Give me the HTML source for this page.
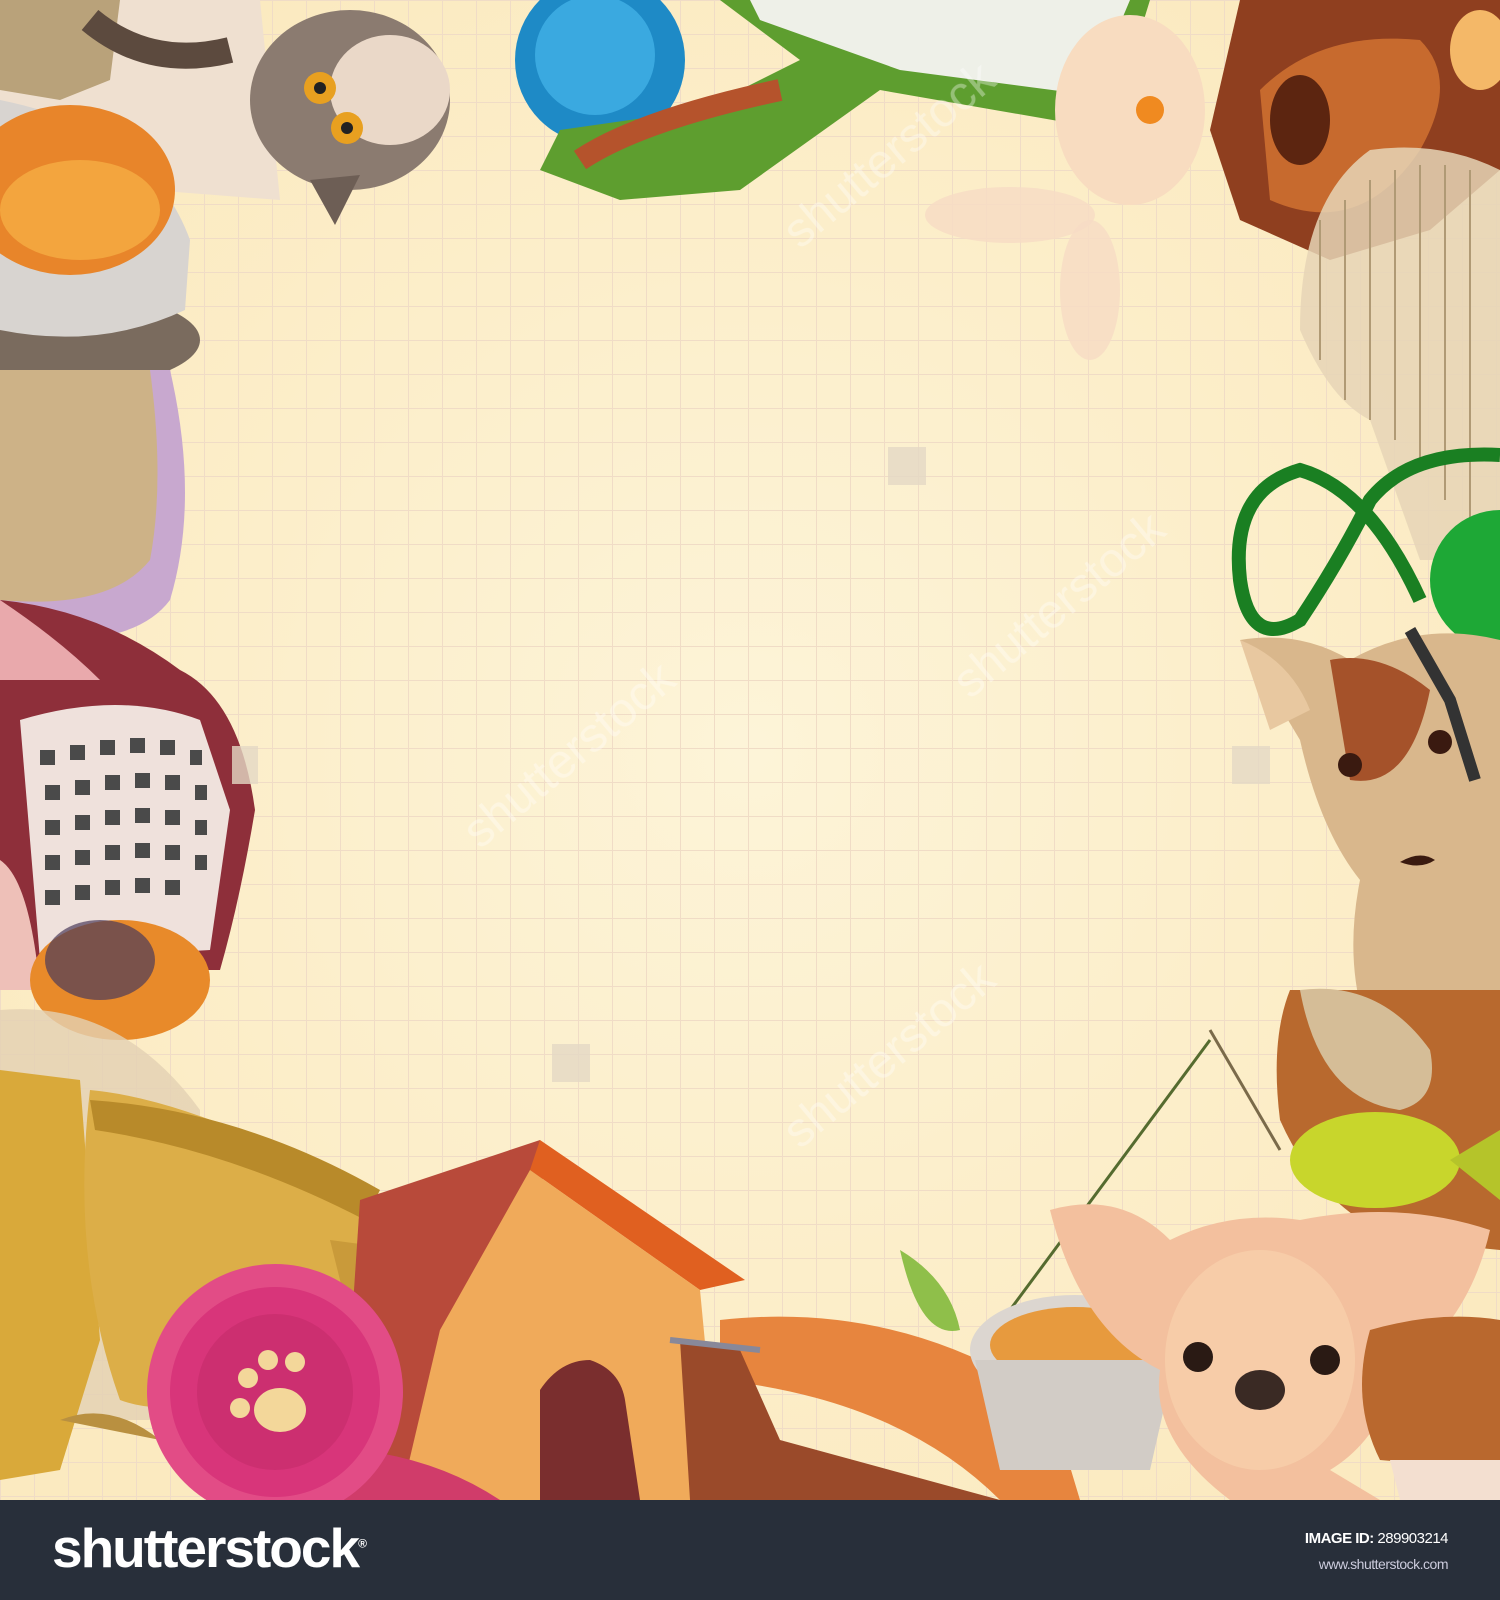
<!DOCTYPE html>
<html><head><meta charset="utf-8"><style>
html,body{margin:0;padding:0;width:1500px;height:1600px;overflow:hidden;background:#282f3a}
#art{position:absolute;left:0;top:0;width:1500px;height:1500px}
#bar{position:absolute;left:0;top:1500px;width:1500px;height:100px;background:#282f3a;color:#fff;font-family:"Liberation Sans",sans-serif}
#logo{position:absolute;left:52px;top:16px;font-size:55px;font-weight:bold;letter-spacing:-2px}
#id{position:absolute;right:52px;top:30px;font-size:15px;letter-spacing:-0.5px}
#www{position:absolute;right:52px;top:56px;font-size:14px;color:#ccd;letter-spacing:-0.5px}
</style></head><body>
<svg id="art" viewBox="0 0 1500 1500" xmlns="http://www.w3.org/2000/svg">
<defs>
<pattern id="g" width="34" height="34" patternUnits="userSpaceOnUse">
<path d="M0 0H34M0 0V34" stroke="#f0dcc6" stroke-width="2" fill="none"/>
</pattern>
<radialGradient id="bg" cx="50%" cy="50%" r="60%"><stop offset="0" stop-color="#fdf4d8"/><stop offset="1" stop-color="#fbeac0"/></radialGradient>
</defs>
<rect width="1500" height="1500" fill="url(#bg)"/>
<rect width="1500" height="1500" fill="url(#g)"/>
<!-- top left -->
<path d="M0 0H260L280 200 150 190 0 130Z" fill="#efe0d0"/>
<path d="M0 0H120L110 80 60 100 0 90Z" fill="#b9a27a"/>
<path d="M90 20Q150 70 230 50" stroke="#5c4a3e" stroke-width="26" fill="none"/>
<ellipse cx="350" cy="100" rx="100" ry="90" fill="#8b7b70"/>
<ellipse cx="390" cy="90" rx="60" ry="55" fill="#ead8c8"/>
<circle cx="320" cy="88" r="16" fill="#e8a020"/><circle cx="347" cy="128" r="16" fill="#e8a020"/>
<circle cx="320" cy="88" r="6" fill="#222"/><circle cx="347" cy="128" r="6" fill="#222"/>
<path d="M310 180L335 225 360 175Z" fill="#6d5e55"/>
<!-- bowl left -->
<ellipse cx="50" cy="340" rx="150" ry="50" fill="#7a6b5e"/>
<path d="M0 100Q150 130 190 240L185 310Q100 350 0 330Z" fill="#d8d4d0"/>
<ellipse cx="70" cy="190" rx="105" ry="85" fill="#e8852a"/>
<ellipse cx="80" cy="210" rx="80" ry="50" fill="#f3a53e"/>
<!-- purple bowl -->
<path d="M0 370H170Q200 500 170 600Q140 640 60 640L0 620Z" fill="#c8a8cf"/>
<path d="M0 370H150Q165 480 150 560Q110 610 0 600Z" fill="#cdb287"/>
<!-- blue pompom -->
<circle cx="600" cy="60" r="85" fill="#1e8ac6"/>
<circle cx="595" cy="55" r="60" fill="#3aa9e0"/>
<!-- green tray -->
<path d="M720 0H1150L1110 130 880 90 740 190 620 200 540 170 560 130 700 110 800 60Z" fill="#5e9e2f"/>
<path d="M750 0H1130L1090 95 900 70 760 20Z" fill="#eef0e8"/>
<path d="M580 160Q640 120 780 90" stroke="#b5532c" stroke-width="22" fill="none"/>
<!-- rabbit -->
<ellipse cx="1130" cy="110" rx="75" ry="95" fill="#f8dcc0"/>
<ellipse cx="1010" cy="215" rx="85" ry="28" fill="#f7dcc4" opacity=".85"/>
<ellipse cx="1090" cy="290" rx="30" ry="70" fill="#f7dcc4" opacity=".85"/>
<circle cx="1150" cy="110" r="14" fill="#f08a20"/>
<!-- brown toy top right -->
<path d="M1240 0H1500V170L1430 230 1330 260 1240 220 1210 130Z" fill="#8f3f1f"/>
<path d="M1260 90Q1320 30 1420 40 1460 80 1420 150 1360 240 1270 200Z" fill="#c76a2e"/>
<ellipse cx="1300" cy="120" rx="30" ry="45" fill="#5c2510"/>
<ellipse cx="1480" cy="50" rx="30" ry="40" fill="#f4b868"/>
<!-- cage right -->
<path d="M1370 150Q1300 200 1300 330 1330 400 1370 420L1420 560H1500V170Q1440 140 1370 150Z" fill="#e6d5b6" opacity=".85"/>
<path d="M1320 220V360M1345 200V400M1370 180V420M1395 170V440M1420 165V470M1445 165V500M1470 170V520" stroke="#b09a75" stroke-width="2"/>
<!-- green leash & ball -->
<circle cx="1500" cy="580" r="70" fill="#1ea836"/>
<path d="M1500 455Q1410 450 1370 500Q1340 560 1300 620Q1250 650 1240 580Q1230 490 1300 470Q1370 490 1420 600" stroke="#1a7f22" stroke-width="14" fill="none"/>
<!-- dog right -->
<path d="M1240 640Q1300 630 1350 660Q1420 620 1500 640V1110Q1430 1120 1380 1060 1340 980 1360 880 1320 830 1300 740Z" fill="#d9b78c"/>
<path d="M1240 640Q1290 660 1310 710L1270 730Z" fill="#e8c8a0"/>
<path d="M1330 660Q1380 650 1430 690 1410 790 1350 780Z" fill="#a5522a"/>
<circle cx="1350" cy="765" r="12" fill="#3a1a10"/><circle cx="1440" cy="742" r="12" fill="#3a1a10"/>
<path d="M1400 862Q1420 850 1435 860 1420 870 1400 862Z" fill="#3a1a10"/>
<path d="M1410 630L1450 700 1475 780" stroke="#333" stroke-width="12" fill="none"/>
<path d="M1290 990Q1270 1040 1280 1120 1320 1210 1400 1240L1500 1250V990Z" fill="#b8692e"/>
<path d="M1300 990Q1380 980 1430 1050 1440 1100 1400 1110 1320 1100 1300 990Z" fill="#d5bd97"/>
<!-- fish -->
<ellipse cx="1375" cy="1160" rx="85" ry="48" fill="#c8d62c"/>
<path d="M1450 1160L1500 1130V1200Z" fill="#b5c42a"/>
<path d="M1210 1030L1280 1150" stroke="#7a6a4a" stroke-width="3"/>
<path d="M1210 1040L1010 1310" stroke="#556b2f" stroke-width="3"/>
<!-- carrier left -->
<path d="M0 600Q100 610 180 670Q240 700 255 810 240 900 220 970H0Z" fill="#8e2f3a"/>
<path d="M0 600Q60 640 100 680L0 680Z" fill="#e9a9ac"/>
<path d="M20 720Q120 690 200 720L230 810 210 950 40 960Z" fill="#efe1dc"/>
<g fill="#4a4a4a">
<rect x="40" y="750" width="15" height="15"/><rect x="70" y="745" width="15" height="15"/><rect x="100" y="740" width="15" height="15"/><rect x="130" y="738" width="15" height="15"/><rect x="160" y="740" width="15" height="15"/><rect x="190" y="750" width="12" height="15"/>
<rect x="45" y="785" width="15" height="15"/><rect x="75" y="780" width="15" height="15"/><rect x="105" y="775" width="15" height="15"/><rect x="135" y="773" width="15" height="15"/><rect x="165" y="775" width="15" height="15"/><rect x="195" y="785" width="12" height="15"/>
<rect x="45" y="820" width="15" height="15"/><rect x="75" y="815" width="15" height="15"/><rect x="105" y="810" width="15" height="15"/><rect x="135" y="808" width="15" height="15"/><rect x="165" y="810" width="15" height="15"/><rect x="195" y="820" width="12" height="15"/>
<rect x="45" y="855" width="15" height="15"/><rect x="75" y="850" width="15" height="15"/><rect x="105" y="845" width="15" height="15"/><rect x="135" y="843" width="15" height="15"/><rect x="165" y="845" width="15" height="15"/><rect x="195" y="855" width="12" height="15"/>
<rect x="45" y="890" width="15" height="15"/><rect x="75" y="885" width="15" height="15"/><rect x="105" y="880" width="15" height="15"/><rect x="135" y="878" width="15" height="15"/><rect x="165" y="880" width="15" height="15"/>
</g>
<path d="M0 860Q30 880 40 990H0Z" fill="#eec0b8"/>
<!-- guinea pig -->
<ellipse cx="120" cy="980" rx="90" ry="60" fill="#e88a2a"/>
<ellipse cx="100" cy="960" rx="55" ry="40" fill="#4b3a5a" opacity=".7"/>
<!-- cage bottom left -->
<path d="M0 1010Q120 1000 200 1110V1420H0Z" fill="#e3d1b3" opacity=".8"/>
<!-- trophy -->
<path d="M0 1070L80 1080 100 1340 60 1470 0 1480Z" fill="#d9a93a"/>
<path d="M90 1090Q200 1100 380 1200L340 1340Q200 1430 120 1400 70 1260 90 1090Z" fill="#dcae48"/>
<path d="M90 1100Q240 1110 380 1190L365 1220Q230 1150 95 1130Z" fill="#b88a2a"/>
<path d="M330 1240L480 1260 420 1300 350 1320Z" fill="#c99a3a"/>
<path d="M60 1420Q110 1400 160 1440 150 1500H40Z" fill="#b99040"/>
<!-- dog house -->
<path d="M360 1200L540 1140 560 1430 400 1500 340 1500Z" fill="#b84a3a"/>
<path d="M540 1140L745 1280 700 1290 530 1170Z" fill="#e06020"/>
<path d="M530 1170L700 1290 720 1500H400L440 1330Z" fill="#f0aa5a"/>
<path d="M540 1460V1390Q560 1360 590 1360 620 1370 625 1400L640 1500H540Z" fill="#7a2e2e"/>
<path d="M360 1450Q440 1460 500 1500H340Z" fill="#d03c6a"/>
<!-- rosette -->
<circle cx="275" cy="1392" r="128" fill="#e24c86"/>
<circle cx="275" cy="1392" r="105" fill="#d8357a"/>
<circle cx="275" cy="1392" r="78" fill="#cc2f70"/>
<ellipse cx="280" cy="1410" rx="26" ry="22" fill="#f3d79a"/>
<circle cx="248" cy="1378" r="10" fill="#f3d79a"/><circle cx="268" cy="1360" r="10" fill="#f3d79a"/><circle cx="295" cy="1362" r="10" fill="#f3d79a"/><circle cx="240" cy="1408" r="10" fill="#f3d79a"/>
<!-- collar -->
<path d="M720 1320Q900 1300 1050 1400L1080 1500H1000Q900 1400 720 1380Z" fill="#e7853e"/>
<path d="M680 1340L740 1350 780 1440 1000 1500H690Z" fill="#9a4a2a"/>
<path d="M670 1340L760 1350" stroke="#889" stroke-width="6"/>
<!-- feather -->
<path d="M900 1250Q950 1280 960 1330 920 1340 900 1250Z" fill="#8fbf4a"/>
<!-- food bowl -->
<ellipse cx="1075" cy="1350" rx="105" ry="55" fill="#dcd6d0"/>
<ellipse cx="1075" cy="1345" rx="85" ry="38" fill="#e79a3e"/>
<path d="M975 1360L1000 1470H1150L1175 1360Z" fill="#d2ccc6"/>
<!-- chihuahua -->
<path d="M1050 1210Q1120 1190 1170 1240 1230 1210 1300 1220 1400 1200 1490 1230 1470 1320 1400 1370 1380 1440 1330 1470L1380 1500H1230Q1150 1440 1160 1370 1080 1330 1050 1210Z" fill="#f3c09e"/>
<ellipse cx="1260" cy="1360" rx="95" ry="110" fill="#f7cca8"/>
<circle cx="1198" cy="1357" r="15" fill="#2a1a14"/><circle cx="1325" cy="1360" r="15" fill="#2a1a14"/>
<ellipse cx="1260" cy="1390" rx="25" ry="20" fill="#3a2a24"/>
<!-- brown thing bottom right -->
<path d="M1370 1330Q1440 1310 1500 1320V1470L1380 1460Q1350 1400 1370 1330Z" fill="#b9682e"/>
<path d="M1390 1460H1500V1500H1400Z" fill="#f3dfd0"/>
<!-- watermark icons -->
<g fill="#e4d8c4" opacity=".8"><rect x="888" y="447" width="38" height="38"/><rect x="552" y="1044" width="38" height="38"/><rect x="1232" y="746" width="38" height="38"/><rect x="232" y="746" width="26" height="38"/></g>
<g fill="#fff" opacity=".35" font-family="Liberation Sans,sans-serif" font-size="48">
<text x="480" y="850" transform="rotate(-40 480 850)">shutterstock</text>
<text x="970" y="700" transform="rotate(-40 970 700)">shutterstock</text>
<text x="800" y="1150" transform="rotate(-40 800 1150)">shutterstock</text>
<text x="800" y="250" transform="rotate(-40 800 250)">shutterstock</text>
</g>
</svg>
<div id="bar">
<div id="logo">shutterstock<sup style="font-size:12px">®</sup></div>
<div id="id"><b>IMAGE ID:</b> 289903214</div>
<div id="www">www.shutterstock.com</div>
</div>
</body></html>
